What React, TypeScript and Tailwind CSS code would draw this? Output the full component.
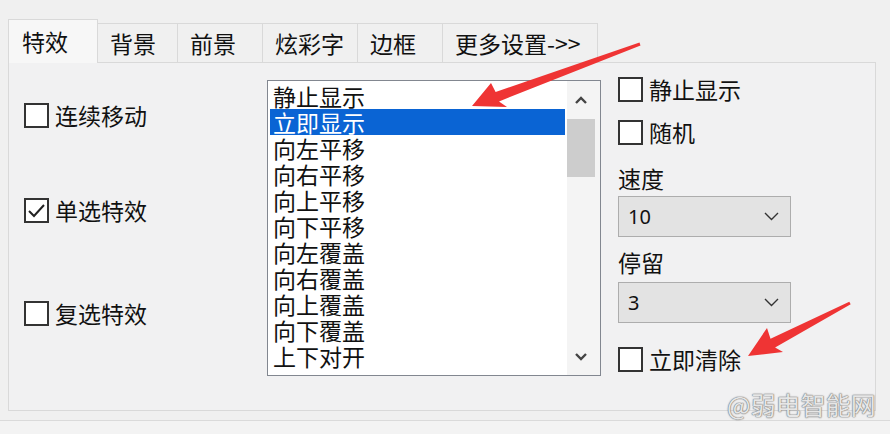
import React from 'react';

const tabs = ['背景', '前景', '炫彩字', '边框', '更多设置->>'];
const tabWidths = ['w-[80px]', 'w-[85px]', 'w-[95px]', 'w-[85px]', 'w-[155px]'];

const effects = [
  '静止显示',
  '立即显示',
  '向左平移',
  '向右平移',
  '向上平移',
  '向下平移',
  '向左覆盖',
  '向右覆盖',
  '向上覆盖',
  '向下覆盖',
  '上下对开',
];

const CheckBox: React.FC<{ label: string; checked?: boolean; className?: string }> = ({ label, checked, className }) => (
  <div className={`flex items-center h-[26px] ${className ?? ''}`}>
    <div className="w-[25px] h-[25px] border-2 border-[#333333] bg-white flex items-center justify-center shrink-0">
      {checked && (
        <svg width="19" height="19" viewBox="0 0 19 19">
          <polyline points="2,10 7,15 17,4" fill="none" stroke="#222" strokeWidth="2" />
        </svg>
      )}
    </div>
    <span className="ml-[6px] text-[23px] leading-none text-[#111]">{label}</span>
  </div>
);

const Select: React.FC<{ value: string; className?: string }> = ({ value, className }) => (
  <div className={`w-[173px] h-[41px] border border-[#adadad] bg-[#e3e3e3] flex items-center justify-between pl-[9px] pr-[11px] ${className ?? ''}`}>
    <span className="text-[20px] text-[#111] font-['Noto_Sans',sans-serif]">{value}</span>
    <svg width="15" height="9" viewBox="0 0 15 9">
      <polyline points="1,1 7.5,7.5 14,1" fill="none" stroke="#333" strokeWidth="1.4" />
    </svg>
  </div>
);

export default function App() {
  return (
    <div className="relative w-[890px] h-[434px] overflow-hidden bg-[#f0f0f0] font-['Noto_Sans_CJK_SC','Noto_Sans',sans-serif] text-[#111]">
      {/* tab strip */}
      <div className="flex items-end pt-[18px] pl-[8px] h-[62px]">
        <div className="relative z-10 w-[90px] h-[44px] -mb-px border border-b-0 border-[#d9d9d9] bg-[#f7f7f7] flex items-center pl-[13px] text-[23px]">
          特效
        </div>
        {tabs.map((t, i) => (
          <div
            key={t}
            className={`${tabWidths[i]} h-[39px] border-t border-r border-[#d9d9d9] bg-[#f0f0f0] flex items-center pl-[12px] text-[23px]`}
          >
            {t}
          </div>
        ))}
      </div>

      {/* panel */}
      <div className="ml-[8px] w-[868px] h-[349px] border border-[#d9d9d9] bg-[#f1f1f2] flex">
        {/* left column */}
        <div className="w-[258px] pl-[15px] flex flex-col pt-[39px]">
          <CheckBox label="连续移动" />
          <CheckBox label="单选特效" checked className="mt-[69px]" />
          <CheckBox label="复选特效" className="mt-[77px]" />
        </div>

        {/* effect list */}
        <div className="mt-[17px] w-[334px] h-[296px] border border-[#828790] bg-white flex">
          <div className="flex-1 pl-[2px] pt-[2px] pr-[2px]">
            {effects.map((e, i) => (
              <div
                key={e}
                className={`h-[26px] px-[3px] text-[23px] leading-[26px] ${i === 1 ? 'bg-[#0a64d4] text-white' : 'text-[#111]'}`}
              >
                {e}
              </div>
            ))}
          </div>
          <div className="w-[33px] bg-[#f4f4f4] flex flex-col items-start">
            <div className="w-[28px] h-[38px] flex items-center justify-center">
              <svg width="12" height="8" viewBox="0 0 12 8">
                <polyline points="1,7 6,2 11,7" fill="none" stroke="#444" strokeWidth="2.4" />
              </svg>
            </div>
            <div className="w-[28px] h-[58px] bg-[#cdcdcd]" />
            <div className="flex-1" />
            <div className="w-[28px] h-[36px] flex items-center justify-center">
              <svg width="12" height="8" viewBox="0 0 12 8">
                <polyline points="1,1 6,6 11,1" fill="none" stroke="#444" strokeWidth="2.4" />
              </svg>
            </div>
          </div>
        </div>

        {/* right column */}
        <div className="pl-[17px] pt-[13px] flex flex-col">
          <CheckBox label="静止显示" />
          <CheckBox label="随机" className="mt-[17px]" />
          <div className="mt-[20px] text-[23px] leading-[26px]">速度</div>
          <Select value="10" className="mt-[5px]" />
          <div className="mt-[12px] text-[23px] leading-[26px]">停留</div>
          <Select value="3" className="mt-[7px]" />
          <CheckBox label="立即清除" className="mt-[23px]" />
        </div>
      </div>

      {/* lower strip */}
      <div className="mt-[9px] border-t border-[#dadada] h-[20px] bg-[#f3f3f3]" />

      {/* watermark */}
      <div className="absolute left-[727px] top-[392px] text-[25px] leading-none text-[#e6e6e6] [text-shadow:0_0_1px_#777,0_0_1px_#777,0_0_2px_#999]">
        @弱电智能网
      </div>

      {/* red annotation arrows */}
      <svg className="absolute inset-0 pointer-events-none" width="890" height="434" viewBox="0 0 890 434">
        <polygon
          points="472,106 491,83 495.6,92 639.5,42.6 640.5,45.4 499,101.4 507,107"
          fill="#ef3434"
        />
        <polygon
          points="748,356 767,328 770.5,338.7 849.3,301.7 850.7,304.3 775.1,347.5 783,352"
          fill="#ef3434"
        />
      </svg>
    </div>
  );
}
